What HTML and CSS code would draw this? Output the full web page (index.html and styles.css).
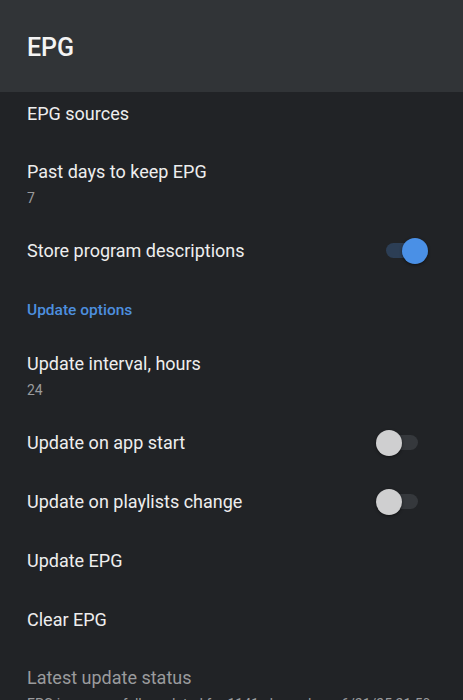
FILE: index.html
```html
<!DOCTYPE html>
<html lang="en">
<head>
    <meta charset="UTF-8">
    <meta name="viewport" content="width=device-width, initial-scale=1.0">
    <title>EPG</title>
    <link rel="stylesheet" href="styles.css">
</head>
<body>
    <header class="app-bar">
        <h1>EPG</h1>
    </header>

    <div class="prefs">
        <div class="pref first">
            <div class="pref-text">
                <div class="pref-title">EPG sources</div>
            </div>
        </div>

        <div class="pref two-line">
            <div class="pref-text">
                <div class="pref-title">Past days to keep EPG</div>
                <div class="pref-summary">7</div>
            </div>
        </div>

        <div class="pref">
            <div class="pref-text">
                <div class="pref-title">Store program descriptions</div>
            </div>
            <span class="switch on"><span class="thumb"></span></span>
        </div>

        <div class="category">Update options</div>

        <div class="pref two-line">
            <div class="pref-text">
                <div class="pref-title">Update interval, hours</div>
                <div class="pref-summary">24</div>
            </div>
        </div>

        <div class="pref">
            <div class="pref-text">
                <div class="pref-title">Update on app start</div>
            </div>
            <span class="switch"><span class="thumb"></span></span>
        </div>

        <div class="pref">
            <div class="pref-text">
                <div class="pref-title">Update on playlists change</div>
            </div>
            <span class="switch"><span class="thumb"></span></span>
        </div>

        <div class="pref">
            <div class="pref-text">
                <div class="pref-title">Update EPG</div>
            </div>
        </div>

        <div class="pref">
            <div class="pref-text">
                <div class="pref-title">Clear EPG</div>
            </div>
        </div>

        <div class="pref two-line disabled">
            <div class="pref-text">
                <div class="pref-title">Latest update status</div>
                <div class="pref-summary">EPG is successfully updated for 1141 channels on 6/21/25 21:50</div>
            </div>
        </div>
    </div>
</body>
</html>
```

FILE: styles.css
```css
:root {
    --bg-color: #212326;
    --bar-color: #313437;
    --text-color: #eeeeee;
    --summary-color: #9a9b9d;
    --accent: #4d8fdf;
}

body {
    font-family: Roboto, "Noto Sans", sans-serif;
    background-color: var(--bg-color);
    color: var(--text-color);
    margin: 0;
    height: 700px;
    overflow: hidden;
}

.app-bar {
    height: 92px;
    background: var(--bar-color);
    display: flex;
    align-items: center;
    padding: 0 27px;
}

.app-bar h1 {
    margin: 0;
    font-size: 25px;
    font-weight: 500;
    color: #f4f4f4;
    padding-top: 3px;
}

.pref {
    display: flex;
    align-items: center;
    min-height: 59px;
    padding: 0 45px 0 27px;
    box-sizing: border-box;
}

.pref.first {
    min-height: 51px;
    padding-bottom: 7px;
}

.pref.two-line {
    min-height: 78px;
    padding-top: 4px;
}

.pref-text {
    flex: 1;
    min-width: 0;
}

.pref-title {
    font-size: 18px;
    line-height: 24px;
}

.pref-summary {
    font-size: 14px;
    line-height: 22px;
    margin-top: 3px;
    color: var(--summary-color);
    white-space: nowrap;
}

.disabled .pref-title {
    color: var(--summary-color);
}

.category {
    display: flex;
    align-items: center;
    height: 55px;
    padding: 5px 27px 0;
    box-sizing: border-box;
    font-size: 15.5px;
    font-weight: 500;
    color: var(--accent);
}

.switch {
    position: relative;
    width: 36px;
    height: 15px;
    border-radius: 8px;
    background: #35383c;
}

.switch.on {
    background: #2c3e55;
    margin-right: -4px;
}

.switch .thumb {
    position: absolute;
    top: 50%;
    left: -6px;
    width: 26px;
    height: 26px;
    margin-top: -13px;
    border-radius: 50%;
    background: #cfcfd0;
    box-shadow: 0 1px 3px rgba(0, 0, 0, 0.5);
}

.switch.on .thumb {
    left: auto;
    right: -6px;
    background: #4a90e6;
}
```
